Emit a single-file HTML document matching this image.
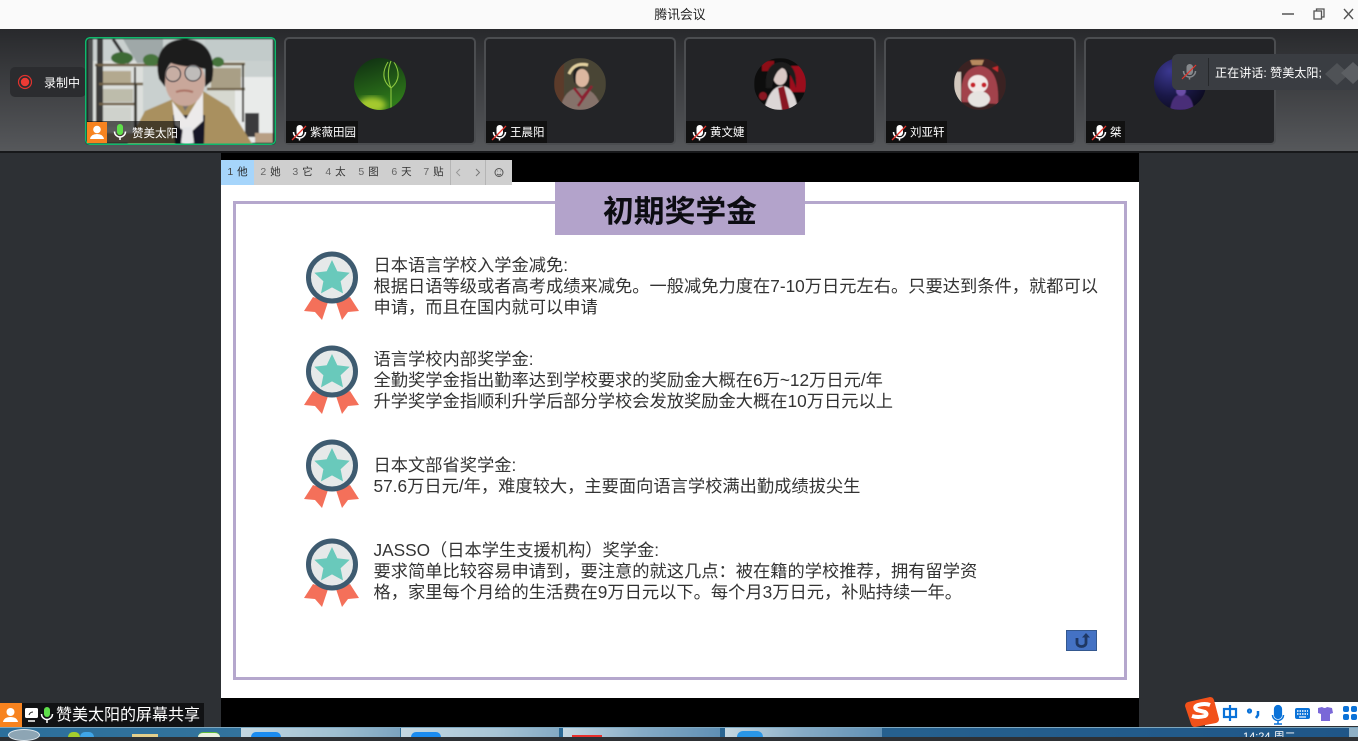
<!DOCTYPE html>
<html lang="zh"><head><meta charset="utf-8"><title>腾讯会议</title>
<style>
*{box-sizing:border-box}
html,body{margin:0;padding:0;width:1358px;height:737px;overflow:hidden;background:#2d3034;font-family:"Liberation Sans","Noto Sans CJK SC",sans-serif}
.a{position:absolute}
#tb{left:1px;top:0;width:1358px;height:29px;background:#fafafa;text-align:center;font-size:12.800px;line-height:29px;color:#222}
#strip{left:0;top:29px;width:1358px;height:122px;background:linear-gradient(#28292c,#56585b)}
#sep{left:0;top:151px;width:1358px;height:2px;background:#17181a}
.tile{position:absolute;top:37px;width:192px;height:108px;background:#232427;border:2px solid #4b4d50;border-radius:5px}
.av{position:absolute;top:58px;width:52px;height:52px;border-radius:50%;overflow:hidden}
.lab{position:absolute;top:121px;height:22px;background:#111;color:#fff;font-size:11.500px;line-height:24px;white-space:nowrap}
.lab span{position:absolute;left:24px;top:0}
.lab svg{position:absolute;left:4px;top:3px}
#slide{left:221px;top:153px;width:918px;height:574px;background:#000}
#white{left:221px;top:182px;width:918px;height:516px;background:#fff}
#frame{left:233px;top:201px;width:894px;height:479px;border:3px solid #b5a7cd}
#title{left:555px;top:182px;width:250px;height:53px;background:#b3a3cb;color:#0c0c12;text-align:center;font-weight:700;font-size:30.800px;line-height:60px;overflow:hidden}
.t{position:absolute;left:373.500px;font-size:17.250px;line-height:21px;color:#333;white-space:nowrap;font-weight:400}
#bar{left:221px;top:160px;width:291px;height:25px;background:#cfcfcf}
.c{position:absolute;top:0;height:25px;width:33px;text-align:center;font-size:10.500px;line-height:25px;color:#333;white-space:nowrap}
.c i{font-style:normal;color:#666;margin-right:4px}
</style></head><body>
<div class="a" id="tb" style="left:0;padding-left:2px">腾讯会议</div>
<svg class="a" style="left:1280px;top:5px" width="78" height="20" fill="none" stroke="#555" stroke-width="1.300"><path d="M2 9h12" stroke-width="1.500"/><rect x="34" y="6" width="7.500" height="8"/><path d="M36.500 6V4h7.500v8h-2.500"/><path d="M64 4l9 10M73 4l-9 10" stroke-width="1.400"/></svg>
<div class="a" id="strip"></div><div class="a" id="sep"></div>

<div class="a" style="left:10px;top:67px;width:76px;height:30px;background:#2b2c2f;border-radius:5px"></div>
<svg class="a" style="left:17px;top:74px" width="16" height="16"><circle cx="8" cy="8" r="6.500" fill="none" stroke="#e0332e" stroke-width="1.200"/><circle cx="8" cy="8" r="4.200" fill="#ee3a34"/></svg>
<div class="a" style="left:44px;top:74px;color:#fff;font-size:12px;line-height:18px">录制中</div>

<!-- presenter -->
<svg class="a" style="left:85px;top:37px;border-radius:4px" width="191" height="108" viewBox="0 0 191 108">
<defs><filter id="b"><feGaussianBlur stdDeviation=".8"/></filter><filter id="b2"><feGaussianBlur stdDeviation=".5"/></filter></defs>
<rect width="191" height="108" fill="#1d1e20"/>
<g filter="url(#b)">
<rect x="3" y="2" width="185" height="104" fill="#c9d0cf"/>
<rect x="8" y="24" width="50" height="80" fill="#dcdfdc"/>
<path d="M38 2L52 26H78V2Z" fill="#9fa8a8"/>
<path d="M120 2H188V24H150L120 28Z" fill="#c2cbca"/>
<rect x="122" y="24" width="38" height="60" fill="#d6d8d0"/>
<rect x="150" y="40" width="38" height="66" fill="#e9ebea"/>
<rect x="3" y="2" width="5" height="104" fill="#4c4d4d"/>
<rect x="12" y="2" width="6" height="100" fill="#3a3b3b"/>
<path d="M28 2L44 26" stroke="#333" stroke-width="3"/>
<path d="M10 28H74M14 47H58M124 27H160M122 52H160M14 67H50" stroke="#6f6147" stroke-width="2.500"/>
<path d="M12 28V95M50 30V100M51 47V96M158 27V85" stroke="#3d3a34" stroke-width="2"/>
<rect x="18" y="34" width="28" height="12" fill="#b3a98f"/><rect x="18" y="52" width="30" height="13" fill="#bdbcab"/>
<rect x="18" y="70" width="28" height="20" fill="#cfd2cc"/>
<rect x="126" y="31" width="30" height="20" fill="#a99f86"/>
<ellipse cx="37" cy="21" rx="11" ry="6" fill="#3e6b35"/><ellipse cx="66" cy="23" rx="8" ry="6" fill="#47743c"/><ellipse cx="133" cy="25" rx="6" ry="5" fill="#44733a"/>
<rect x="160" y="76" width="14" height="24" fill="#3a3a3c"/>
<rect x="3" y="96" width="56" height="10" fill="#a9957e"/><rect x="170" y="96" width="18" height="10" fill="#b89f84"/>
<path d="M42 108L60 74 88 62 118 54 144 70 168 108Z" fill="#a9905f"/>
<path d="M88 78L90 108H119L120 78Z" fill="#161826"/>
<path d="M87 64L101 82 118 54 118 84 104 97 90 88Z" fill="#eceaea"/>
<path d="M98 90L107 90 109 106 102 108 96 106Z" fill="#e6e6e8"/>
<path d="M90 52L100 74 114 52Z" fill="#77706d"/>
<ellipse cx="100" cy="44" rx="20" ry="25" fill="#c9a79a"/>
<path d="M74 42C68 16 80 2 100 2 122 2 132 20 127 44L120 50 120 32C112 30 96 30 86 26 82 30 80 36 80 50Z" fill="#1c1a1c"/>
<path d="M91 55q8-3 17 0" stroke="#a96d60" stroke-width="2" fill="none"/>
</g>
<g filter="url(#b2)"><circle cx="88" cy="37" r="7.500" fill="#c2bcb8" fill-opacity=".35" stroke="#5a5152" stroke-width="1.200"/><circle cx="108" cy="36" r="8" fill="#b9c9cf" fill-opacity=".6" stroke="#5a5152" stroke-width="1.200"/></g>
<rect x=".75" y=".75" width="189.500" height="106.500" rx="4" fill="none" stroke="#0fb96c" stroke-width="1.500"/>
</svg>
<div class="a" style="left:87px;top:121px;width:93px;height:22px;background:rgba(10,10,10,.62)"></div>
<svg class="a" style="left:87px;top:122px" width="20" height="21"><rect width="20" height="21" fill="#f7831f"/><circle cx="10" cy="7.500" r="3.800" fill="#fff"/><path d="M3 17q1-5 7-5t7 5z" fill="#fff"/></svg>
<svg class="a" style="left:113px;top:124px" width="14" height="17"><rect x="4" y="0" width="6" height="11" rx="3" fill="#5fe04a"/><path d="M1.500 7.500a5.500 5.500 0 0 0 11 0M7 13v3" fill="none" stroke="#fff" stroke-width="1.500"/></svg>
<div class="a" style="left:132px;top:123px;color:#fff;font-size:11.500px;line-height:22px">赞美太阳</div>

<!-- other tiles -->
<div class="tile" style="left:284px"></div><div class="tile" style="left:484px"></div><div class="tile" style="left:684px"></div><div class="tile" style="left:884px"></div><div class="tile" style="left:1084px"></div>

<svg class="av" style="left:354px" viewBox="0 0 52 52"><defs><filter id="s"><feGaussianBlur stdDeviation=".6"/></filter><filter id="s2"><feGaussianBlur stdDeviation="3"/></filter><linearGradient id="g1" x1="0" y1="0" x2=".3" y2="1"><stop offset="0" stop-color="#0e2c12"/><stop offset="1" stop-color="#2f7a1a"/></linearGradient></defs><rect width="52" height="52" fill="url(#g1)"/><ellipse cx="18" cy="47" rx="14" ry="8" fill="#a4c92e" filter="url(#s2)"/><path d="M37 50V30M37 30C27 22 29 12 34 4M37 30C47 22 45 12 40 4M37 30C33 20 34 10 37 3" fill="none" stroke="#8cc63f" stroke-width="1.100"/></svg>
<svg class="av" style="left:554px" viewBox="0 0 52 52"><g filter="url(#s)"><rect width="52" height="52" fill="#4a4434"/><rect x="0" y="0" width="10" height="52" fill="#5b3a2b"/><path d="M6 52q4-22 20-22t22 22z" fill="#85726a"/><path d="M20 30l8 10 10-12-14 20" fill="none" stroke="#8a2430" stroke-width="2.500"/><ellipse cx="28" cy="20" rx="7" ry="9" fill="#dcb7a0"/><path d="M20 24Q16 6 30 8 20 10 22 26z" fill="#222"/><path d="M15 16Q20 4 34 7" stroke="#e2d09f" stroke-width="3" fill="none"/></g></svg>
<svg class="av" style="left:754px" viewBox="0 0 52 52"><g filter="url(#s)"><rect width="52" height="52" fill="#0d0b0c"/><rect x="36" y="8" width="16" height="26" fill="#9b0d1c"/><rect x="8" y="3" width="12" height="10" fill="#8d0c18"/><path d="M10 52q6-24 18-24t16 24z" fill="#dcd6d6"/><path d="M24 30l4 22h8l-6-24z" fill="#8a1420"/><ellipse cx="26" cy="18" rx="7" ry="9" fill="#d9c8c4"/><path d="M12 30Q10 4 28 4q16 2 14 26-6-18-14-20-8 4-10 20z" fill="#1b1a1d"/><circle cx="9" cy="38" r="4" fill="#8a1822"/></g></svg>
<svg class="av" style="left:954px" viewBox="0 0 52 52"><g filter="url(#s)"><rect width="52" height="52" fill="#3b2023"/><rect x="0" y="14" width="7" height="38" fill="#d3c8be"/><path d="M8 44Q4 10 26 8q20 2 18 38z" fill="#a2424b"/><ellipse cx="24" cy="26" rx="10" ry="9" fill="#f2e8e6"/><circle cx="19" cy="27" r="2.500" fill="#c8212a"/><circle cx="30" cy="27" r="2.500" fill="#c8212a"/><ellipse cx="25" cy="41" rx="11" ry="8" fill="#e6e3e0"/><path d="M16 2h14l-2 5H18z" fill="#b78a5e"/><path d="M38 10l6-2 0 6z" fill="#c82a2e"/></g></svg>
<svg class="av" style="left:1154px" viewBox="0 0 52 52"><defs><radialGradient id="p" cx=".3" cy=".25" r=".8"><stop offset="0" stop-color="#3b3890"/><stop offset=".6" stop-color="#1a1848"/><stop offset="1" stop-color="#0d0c22"/></radialGradient></defs><rect width="52" height="52" fill="url(#p)"/><path d="M16 52q2-16 12-16t12 16z" fill="#4a2f78" filter="url(#s)"/><circle cx="27" cy="33" r="5" fill="#6a4ea6" filter="url(#s)"/></svg>

<svg width="0" height="0" style="position:absolute"><defs><g id="mic"><rect x="6.500" y="1" width="6.500" height="11" rx="3.200" fill="#fff"/><path d="M3.500 8a6 6 0 0 0 12 0M9.500 14v2.500" fill="none" stroke="#fff" stroke-width="1.500"/><path d="M2 16L16 2" stroke="#e5342c" stroke-width="1.300"/></g></defs></svg>
<div class="lab" style="left:286px;width:72px"><svg width="20" height="18"><use href="#mic"/></svg><span>紫薇田园</span></div>
<div class="lab" style="left:486px;width:61px"><svg width="20" height="18"><use href="#mic"/></svg><span>王晨阳</span></div>
<div class="lab" style="left:686px;width:61px"><svg width="20" height="18"><use href="#mic"/></svg><span>黄文婕</span></div>
<div class="lab" style="left:886px;width:61px"><svg width="20" height="18"><use href="#mic"/></svg><span>刘亚轩</span></div>
<div class="lab" style="left:1086px;width:39px"><svg width="20" height="18"><use href="#mic"/></svg><span>桀</span></div>

<!-- speaking -->
<div class="a" style="left:1172px;top:54px;width:186px;height:36px;background:#3a3d42;border-radius:6px 0 0 6px"></div>
<svg class="a" style="left:1180px;top:63px" width="19" height="18"><rect x="6.500" y="1" width="6.500" height="11" rx="3.200" fill="#85888c"/><path d="M3.500 8a6 6 0 0 0 12 0M9.500 14v2.500" fill="none" stroke="#85888c" stroke-width="1.500"/><path d="M2 16L16 2" stroke="#e5342c" stroke-width="1.200"/></svg>
<div class="a" style="left:1208px;top:58px;width:1px;height:28px;background:#26282b"></div>
<div class="a" style="left:1215px;top:64px;color:#fff;font-size:12.100px;line-height:18px;white-space:nowrap">正在讲话: 赞美太阳;</div>
<svg class="a" style="left:1323px;top:60px" width="35" height="26"><path d="M2 14L14 3 26 14 14 25Z" fill="#4f5256"/><path d="M18 13L30 2 42 13 30 24Z" fill="#5c5f63"/></svg>

<!-- slide -->
<div class="a" id="slide"></div><div class="a" id="white"></div><div class="a" id="frame"></div>
<div class="a" id="title">初期奖学金</div>

<div class="a" id="bar">
<div class="c" style="left:0;background:#a6d5fb;color:#222"><i style="color:#444">1</i>他</div>
<div class="c" style="left:33px"><i>2</i>她</div>
<div class="c" style="left:65px"><i>3</i>它</div>
<div class="c" style="left:98px"><i>4</i>太</div>
<div class="c" style="left:131px"><i>5</i>图</div>
<div class="c" style="left:164px"><i>6</i>天</div>
<div class="c" style="left:196px"><i>7</i>贴</div>
<div class="a" style="left:229px;top:0;width:1px;height:25px;background:#b5b5b5"></div>
<div class="a" style="left:264px;top:0;width:1px;height:25px;background:#b5b5b5"></div>
<svg class="a" style="left:232px;top:6px" width="30" height="13" fill="none" stroke="#999"><path d="M7 3L3.500 6.500 7 10"/></svg>
<svg class="a" style="left:252px;top:6px" width="12" height="13" fill="none" stroke="#777"><path d="M3 3L6.500 6.500 3 10"/></svg>
<svg class="a" style="left:272px;top:6px" width="13" height="13" fill="none" stroke="#555"><circle cx="6" cy="6.500" r="4"/><path d="M4 8q2 1.800 4 0M4.500 5h.5M7 5h.5"/></svg>
</div>

<svg width="0" height="0" style="position:absolute"><defs><g id="badge">
<path d="M9 -0 L0 14 11 15 18 23 24 5Z" transform="translate(304,297)" fill="#f4705a"/>
<path d="M13 -0 L22 14 11 15 5 23 -1 5Z" transform="translate(337,297)" fill="#f4705a"/>
<circle cx="332" cy="277.500" r="23.500" fill="#e6e9e9" stroke="#3e5b70" stroke-width="5"/>
<path d="M332 260l5.300 11.300 12.400 1.500-9.100 8.400 2.400 12.200-11-6-11 6 2.400-12.200-9.100-8.400 12.400-1.500z" fill="#69c9bb"/>
</g></defs></svg>
<svg class="a" style="left:0;top:0" width="1358" height="737"><use href="#badge"/><use href="#badge" y="94"/><use href="#badge" y="188"/><use href="#badge" y="287"/></svg>

<div class="t" style="top:255px">日本语言学校入学金减免:<br>根据日语等级或者高考成绩来减免。一般减免力度在7-10万日元左右。只要达到条件，就都可以<br>申请，而且在国内就可以申请</div>
<div class="t" style="top:349px">语言学校内部奖学金:<br>全勤奖学金指出勤率达到学校要求的奖励金大概在6万~12万日元/年<br>升学奖学金指顺利升学后部分学校会发放奖励金大概在10万日元以上</div>
<div class="t" style="top:455px">日本文部省奖学金:<br>57.6万日元/年，难度较大，主要面向语言学校满出勤成绩拔尖生</div>
<div class="t" style="top:540px">JASSO（日本学生支援机构）奖学金:<br>要求简单比较容易申请到，要注意的就这几点：被在籍的学校推荐，拥有留学资<br>格，家里每个月给的生活费在9万日元以下。每个月3万日元，补贴持续一年。</div>

<svg class="a" style="left:1066px;top:630px" width="31" height="21"><rect x=".5" y=".5" width="30" height="20" fill="#4472c4" stroke="#34588f"/><path d="M11 8v5a4.500 3.500 0 0 0 9 0V7" fill="none" stroke="#1f3864" stroke-width="2.800"/><path d="M16 7.500L20 3l4 4.500z" fill="#1f3864"/></svg>

<!-- presenter label -->
<div class="a" style="left:0;top:703px;width:22px;height:24px;background:#f7831f"></div>
<svg class="a" style="left:0;top:703px" width="22" height="24"><circle cx="10.500" cy="9" r="4" fill="#fff"/><path d="M3 19q1-5 7.500-5t7.500 5z" fill="#fff"/></svg>
<div class="a" style="left:22px;top:703px;width:182px;height:24px;background:#111214"></div>
<svg class="a" style="left:24px;top:707px" width="30" height="17"><rect x="1" y="1" width="13" height="10" rx="1.500" fill="#fff"/><path d="M4 14h7" stroke="#fff" stroke-width="1.500"/><path d="M5 8q1-3 4-3" stroke="#222" fill="none"/><rect x="20" y="0" width="6" height="10" rx="3" fill="#5fe04a"/><path d="M17.500 7a5.500 5.500 0 0 0 11 0M23 13v3" fill="none" stroke="#fff" stroke-width="1.500"/></svg>
<div class="a" style="left:56px;top:704px;color:#fff;font-size:16px;line-height:23px;white-space:nowrap">赞美太阳的屏幕共享</div>

<!-- taskbar -->
<div class="a" style="left:0;top:727px;width:1358px;height:10px;background:linear-gradient(90deg,#2c6f9b,#33739d 18%,#27628f 60%,#1f5688);border-top:1px solid #7ea7bf"></div>
<div class="a" style="left:241px;top:728px;width:159px;height:9px;background:linear-gradient(100deg,#c5d8e2,#9fbfd1 60%,#7ba3bf)"></div>
<div class="a" style="left:401px;top:728px;width:158px;height:9px;background:linear-gradient(100deg,#c5d8e2,#a8c5d6 60%,#83a9c3)"></div>
<div class="a" style="left:563px;top:728px;width:157px;height:9px;background:linear-gradient(100deg,#c5d8e2,#86abc6 50%,#5f8fb4)"></div>
<div class="a" style="left:725px;top:728px;width:157px;height:9px;background:linear-gradient(100deg,#c5d8e2,#86abc6 50%,#5f8fb4)"></div>
<div class="a" style="left:251px;top:732px;width:30px;height:5px;background:#1b8cf0;border-radius:5px 5px 0 0"></div>
<div class="a" style="left:411px;top:732px;width:30px;height:5px;background:#1b8cf0;border-radius:5px 5px 0 0"></div>
<div class="a" style="left:572px;top:735px;width:30px;height:2px;background:#e8302c"></div>
<div class="a" style="left:737px;top:731px;width:26px;height:6px;background:#2a96e6;border-radius:13px 13px 0 0"></div>
<div class="a" style="left:8px;top:729px;width:32px;height:12px;border-radius:50%;background:#8da5b4;border:1px solid #dfe8ee"></div>
<div class="a" style="left:68px;top:732px;width:12px;height:5px;background:#a4cf2e;border-radius:6px 6px 0 0"></div>
<div class="a" style="left:80px;top:732px;width:14px;height:5px;background:#3fa5e8;border-radius:7px 7px 0 0"></div>
<div class="a" style="left:132px;top:734px;width:26px;height:3px;background:#e3cf8c"></div>
<div class="a" style="left:198px;top:732px;width:22px;height:5px;background:#e9f1e0;border-radius:11px 11px 0 0;border-top:1px solid #5dbb3a"></div>
<div class="a" style="left:1243px;top:731px;height:6px;width:58px;overflow:hidden;color:#fff;font-size:11px;line-height:12px;white-space:nowrap">14:24 周二</div>
<div class="a" style="left:1349px;top:728px;width:9px;height:9px;background:#8fb0c6"></div>

<!-- sogou -->
<div class="a" style="left:1205px;top:702px;width:153px;height:24px;background:#fff"></div>
<svg class="a" style="left:1184px;top:696px" width="174" height="32">
<path d="M4 6L26 1q3 0 4 3l5 19q0 3-3 4L11 31q-3 0-4-3L1 10q0-3 3-4z" fill="#f2511a"/>
<path d="M26 9q-5-2-12 0-5 2-1 5l8 2q3 2 0 4-7 2-13 0" fill="none" stroke="#fff" stroke-width="4"/>
<g fill="none" stroke="#0a72d8" stroke-width="2.200"><rect x="40" y="13" width="12" height="8"/><path d="M46 9v16"/>
<circle cx="65.500" cy="15" r="1.500"/><path d="M74 15v4l-2 3" stroke-width="2.500"/>
<path d="M88.500 19a5.500 5.500 0 0 0 11 0M94 25v3H90h8" stroke-width="1.500"/><rect x="91" y="10" width="6" height="12" rx="3" fill="#0a72d8"/></g>
<rect x="111" y="12" width="15" height="11" rx="2" fill="#0a72d8"/><path d="M113 15h11M113 18h11" stroke="#fff" stroke-width="1.400" stroke-dasharray="1.500 1"/><path d="M115 21h7" stroke="#fff" stroke-width="1.200"/>
<path d="M134 12l4-1q3 2 5 0l5 1 1 5-3 1v7h-9v-7l-3-1z" fill="#7a68d8"/>
<g fill="#0a72d8"><rect x="159" y="10" width="6" height="6" rx="2"/><rect x="167" y="10" width="6" height="6" rx="2"/><rect x="159" y="18" width="6" height="6" rx="2"/><rect x="167" y="18" width="6" height="6" rx="2"/></g>
</svg>
</body></html>
